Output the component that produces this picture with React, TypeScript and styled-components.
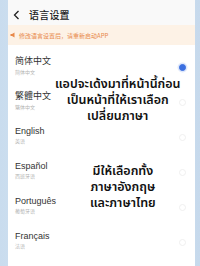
import React from 'react';
import styled, { createGlobalStyle } from 'styled-components';

const GlobalStyle = createGlobalStyle`
  html, body {
    margin: 0;
    padding: 0;
    background: linear-gradient(90deg, #c9dcee 0%, #dbe8f4 50%, #c6d9ec 100%);
    font-family: "Noto Sans", "Noto Sans CJK SC", sans-serif;
  }
`;

const Page = styled.div`
  display: flex;
  height: 266px;
  padding: 0 5px 0 8px;
  box-sizing: border-box;
`;

const Panel = styled.div`
  position: relative;
  flex: 1;
  display: flex;
  flex-direction: column;
  background: #ffffff;
  overflow: hidden;
`;

const Header = styled.div`
  display: flex;
  align-items: center;
  gap: 9px;
  height: 25px;
  padding: 4px 0 0 5px;
  box-sizing: border-box;
  background: #f9f9f9;
`;

const HeaderTitle = styled.span`
  font-family: "Noto Sans CJK SC", sans-serif;
  font-size: 10px;
  font-weight: 500;
  color: #222;
  letter-spacing: 0.2px;
`;

const Notice = styled.div`
  display: flex;
  align-items: center;
  gap: 3px;
  height: 20px;
  padding-left: 2px;
  background: #fdf2e6;
  font-family: "Noto Sans CJK SC", sans-serif;
  font-size: 6px;
  color: #e8894a;
`;

const List = styled.div`
  display: flex;
  flex-direction: column;
  padding-top: 2px;
`;

const Row = styled.div`
  display: flex;
  align-items: center;
  justify-content: space-between;
  height: 35px;
  padding: 0 9px 0 7px;
  box-sizing: border-box;
`;

const Labels = styled.div`
  display: flex;
  flex-direction: column;
  gap: 1px;
`;

const Title = styled.span`
  font-family: "Liberation Sans", "Noto Sans CJK SC", sans-serif;
  font-size: 9px;
  color: #333;
`;

const Sub = styled.span`
  font-family: "Noto Sans CJK SC", sans-serif;
  font-size: 5px;
  color: #b5b5b5;
`;

const Radio = styled.span<{ $on?: boolean }>`
  width: 7px;
  height: 7px;
  border-radius: 50%;
  box-sizing: border-box;
  margin-top: 6px;
  background: ${(p) => (p.$on ? '#3b6fe0' : 'transparent')};
  border: 1px solid ${(p) => (p.$on ? '#3b6fe0' : '#f0f0f0')};
  box-shadow: ${(p) => (p.$on ? '0 0 0 1.5px #dfe8fb' : 'none')};
`;

const Note = styled.div<{ $top: number; $left: number }>`
  position: absolute;
  top: ${(p) => p.$top}px;
  left: ${(p) => p.$left}px;
  display: flex;
  flex-direction: column;
  align-items: center;
  font-family: "Noto Sans Thai", "Noto Sans", "DejaVu Sans", sans-serif;
  font-size: 12.5px;
  line-height: 16px;
  font-weight: 600;
  color: #111;
  white-space: nowrap;
`;

const langs = [
  { name: '简体中文', sub: '简体中文', on: true },
  { name: '繁體中文', sub: '繁体中文' },
  { name: 'English', sub: '英语' },
  { name: 'Español', sub: '西班牙语' },
  { name: 'Português', sub: '葡萄牙语' },
  { name: 'Français', sub: '法语' },
];

const Chevron = () => (
  <svg width="7" height="10" viewBox="0 0 7 10">
    <path d="M5.5 1 L1.5 5 L5.5 9" fill="none" stroke="#222" strokeWidth="1.3" />
  </svg>
);

const Speaker = () => (
  <svg width="6" height="6" viewBox="0 0 6 6">
    <path d="M0.5 2 H2 L4.5 0.5 V5.5 L2 4 H0.5 Z" fill="#e8894a" />
  </svg>
);

export default function App() {
  return (
    <>
      <GlobalStyle />
      <Page>
        <Panel>
          <Header>
            <Chevron />
            <HeaderTitle>语言设置</HeaderTitle>
          </Header>
          <Notice>
            <Speaker />
            <span>修改语言设置后，请重新启动APP</span>
          </Notice>
          <List>
            {langs.map((l) => (
              <Row key={l.name}>
                <Labels>
                  <Title>{l.name}</Title>
                  <Sub>{l.sub}</Sub>
                </Labels>
                <Radio $on={l.on} />
              </Row>
            ))}
          </List>
          <Note $top={77} $left={47}>
            <span>แอปจะเด้งมาที่หน้านี้ก่อน</span>
            <span>เป็นหน้าที่ให้เราเลือก</span>
            <span>เปลี่ยนภาษา</span>
          </Note>
          <Note $top={164} $left={82}>
            <span>มีให้เลือกทั้ง</span>
            <span>ภาษาอังกฤษ</span>
            <span>และภาษาไทย</span>
          </Note>
        </Panel>
      </Page>
    </>
  );
}
